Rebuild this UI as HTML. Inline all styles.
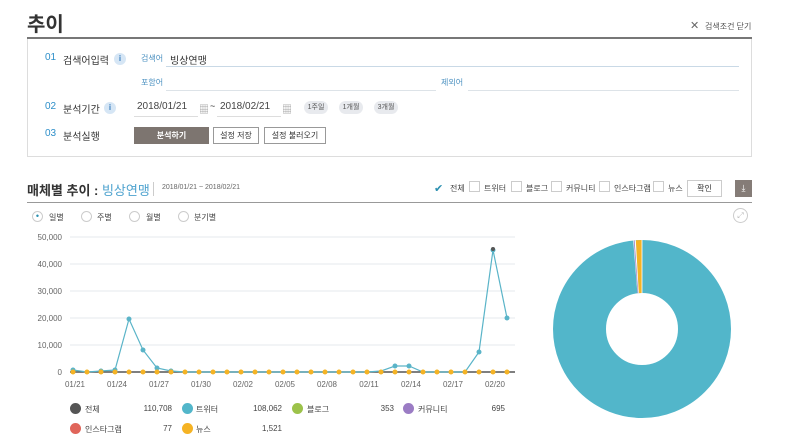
<!DOCTYPE html>
<html><head><meta charset="utf-8"><style>
*{margin:0;padding:0;box-sizing:border-box}
body{width:800px;height:446px;background:#fff;position:relative;overflow:hidden;font-family:"Liberation Sans","Noto Sans CJK KR",sans-serif;color:#333}
.a{position:absolute;white-space:nowrap}
.blue{color:#2e8fc9}
.lbl{font-size:8px;color:#4a90c0}
.info{width:12px;height:12px;border-radius:50%;background:#d6e6f5;color:#3a7fc0;font-size:8px;font-weight:bold;text-align:center;line-height:12px}
.pill{height:13px;border-radius:7px;background:#e8eaee;font-size:7px;color:#555;text-align:center;line-height:13px;width:24px}
.btn{height:17px;border:1px solid #999;font-size:8px;text-align:center;line-height:15px;background:#fff}
.cb{width:11px;height:11px;border:1px solid #ccc;background:#fff}
.rd{width:11px;height:11px;border:1px solid #ccc;border-radius:50%}
.dot{width:11px;height:11px;border-radius:50%}
.sm{font-size:8px;color:#444}
</style></head><body>
<div class="a" style="left:27px;top:8px;font-size:20px;font-weight:bold;color:#333">추이</div>
<div class="a" style="left:690px;top:19px;font-size:11px;color:#666">✕</div>
<div class="a" style="left:705px;top:21px;font-size:8px;color:#555">검색조건 닫기</div>
<div class="a" style="left:27px;top:37px;width:725px;height:2px;background:#777"></div>
<div class="a" style="left:27px;top:39px;width:725px;height:118px;border:1px solid #ddd;border-top:none"></div>

<div class="a blue" style="left:45px;top:52px;font-size:10px">01</div>
<div class="a" style="left:63px;top:52px;font-size:10px">검색어입력</div>
<div class="a info" style="left:114px;top:53px">i</div>
<div class="a lbl" style="left:141px;top:53px">검색어</div>
<div class="a" style="left:170px;top:52px;font-size:10px">빙상연맹</div>
<div class="a" style="left:166px;top:66px;width:573px;height:1px;background:#c9d9e6"></div>
<div class="a lbl" style="left:141px;top:77px">포함어</div>
<div class="a" style="left:166px;top:90px;width:270px;height:1px;background:#dde3e8"></div>
<div class="a lbl" style="left:441px;top:77px">제외어</div>
<div class="a" style="left:468px;top:90px;width:271px;height:1px;background:#dde3e8"></div>

<div class="a blue" style="left:45px;top:101px;font-size:10px">02</div>
<div class="a" style="left:63px;top:101px;font-size:10px">분석기간</div>
<div class="a info" style="left:104px;top:102px">i</div>
<div class="a" style="left:137px;top:101px;font-size:10px;color:#444">2018/01/21</div>
<div class="a" style="left:199px;top:101px;font-size:10px;color:#999">▦</div>
<div class="a" style="left:210px;top:101px;font-size:9px">~</div>
<div class="a" style="left:220px;top:101px;font-size:10px;color:#444">2018/02/21</div>
<div class="a" style="left:282px;top:101px;font-size:10px;color:#999">▦</div>
<div class="a" style="left:134px;top:116px;width:64px;height:1px;background:#ddd"></div>
<div class="a" style="left:217px;top:116px;width:64px;height:1px;background:#ddd"></div>
<div class="a pill" style="left:304px;top:101px">1주일</div>
<div class="a pill" style="left:339px;top:101px">1개월</div>
<div class="a pill" style="left:374px;top:101px">3개월</div>

<div class="a blue" style="left:45px;top:128px;font-size:10px">03</div>
<div class="a" style="left:63px;top:128px;font-size:10px">분석실행</div>
<div class="a btn" style="left:134px;top:127px;width:75px;background:#7d7570;border-color:#7d7570;color:#fff;font-weight:bold">분석하기</div>
<div class="a btn" style="left:213px;top:127px;width:46px">설정 저장</div>
<div class="a btn" style="left:264px;top:127px;width:62px">설정 불러오기</div>

<div class="a" style="left:27px;top:180px;font-size:13px;font-weight:bold;color:#333">매체별 추이 : <span style="color:#4fa3cf;font-weight:normal">빙상연맹</span></div>
<div class="a" style="left:153px;top:182px;width:1px;height:14px;background:#ccc"></div>
<div class="a" style="left:162px;top:184px;font-size:7px;color:#666">2018/01/21 ~ 2018/02/21</div>
<div class="a" style="left:434px;top:182px;font-size:11px;color:#2a8fb0">✔</div>
<div class="a sm" style="left:450px;top:183px">전체</div>
<div class="a cb" style="left:469px;top:181px"></div><div class="a sm" style="left:484px;top:183px">트위터</div>
<div class="a cb" style="left:511px;top:181px"></div><div class="a sm" style="left:526px;top:183px">블로그</div>
<div class="a cb" style="left:551px;top:181px"></div><div class="a sm" style="left:566px;top:183px">커뮤니티</div>
<div class="a cb" style="left:599px;top:181px"></div><div class="a sm" style="left:614px;top:183px">인스타그램</div>
<div class="a cb" style="left:653px;top:181px"></div><div class="a sm" style="left:668px;top:183px">뉴스</div>
<div class="a btn" style="left:687px;top:180px;width:35px;border-color:#ccc">확인</div>
<div class="a" style="left:735px;top:180px;width:17px;height:17px;background:#857c77;color:#fff;font-size:9px;text-align:center;line-height:17px">⤓</div>
<div class="a" style="left:27px;top:202px;width:725px;height:1px;background:#999"></div>

<div class="a rd" style="left:32px;top:211px;text-align:center;line-height:9px;font-size:9px;color:#2a8fb0">•</div><div class="a sm" style="left:49px;top:212px">일별</div>
<div class="a rd" style="left:81px;top:211px"></div><div class="a sm" style="left:97px;top:212px">주별</div>
<div class="a rd" style="left:129px;top:211px"></div><div class="a sm" style="left:146px;top:212px">월별</div>
<div class="a rd" style="left:178px;top:211px"></div><div class="a sm" style="left:194px;top:212px">분기별</div>
<div class="a" style="left:733px;top:208px;width:15px;height:15px;border:1px solid #ccc;border-radius:50%;font-size:8px;color:#bbb;text-align:center;line-height:13px">⤢</div>

<svg class="a" style="left:0;top:0" width="800" height="446">
<g font-size="8" fill="#666" text-anchor="end" font-family="Liberation Sans,sans-serif">
<text x="62" y="240">50,000</text><text x="62" y="267">40,000</text><text x="62" y="294">30,000</text><text x="62" y="321">20,000</text><text x="62" y="348">10,000</text><text x="62" y="375">0</text>
</g>
<g stroke="#e6e9ee" stroke-width="1">
<line x1="70" y1="237" x2="515" y2="237"/><line x1="70" y1="264" x2="515" y2="264"/><line x1="70" y1="291" x2="515" y2="291"/><line x1="70" y1="318" x2="515" y2="318"/><line x1="70" y1="345" x2="515" y2="345"/>
</g>
<line x1="70" y1="372" x2="515" y2="372" stroke="#555" stroke-width="1.5"/>
<g font-size="8" fill="#666" text-anchor="middle" font-family="Liberation Sans,sans-serif">
<text x="75" y="387">01/21</text><text x="117" y="387">01/24</text><text x="159" y="387">01/27</text><text x="201" y="387">01/30</text><text x="243" y="387">02/02</text><text x="285" y="387">02/05</text><text x="327" y="387">02/08</text><text x="369" y="387">02/11</text><text x="411" y="387">02/14</text><text x="453" y="387">02/17</text><text x="495" y="387">02/20</text>
</g>
<polyline fill="none" stroke="#5ab4c8" stroke-width="1.2" points="73,370 87,372 101,371 115,370 129,319 143,350 157,368 171,371 185,372 199,372 213,372 227,372 241,372 255,372 269,372 283,372 297,372 311,372 325,372 339,372 353,372 367,372 381,371 395,366 409,366 423,372 437,372 451,372 465,372 479,352 493,250 507,318"/>
<g fill="#5ab4c8">
<circle cx="73" cy="370" r="2.5"/><circle cx="101" cy="371" r="2.5"/><circle cx="115" cy="370" r="2.5"/><circle cx="129" cy="319" r="2.5"/><circle cx="143" cy="350" r="2.5"/><circle cx="157" cy="368" r="2.5"/><circle cx="171" cy="371" r="2.5"/><circle cx="395" cy="366" r="2.5"/><circle cx="409" cy="366" r="2.5"/><circle cx="479" cy="352" r="2.5"/><circle cx="493" cy="250" r="2.5"/><circle cx="507" cy="318" r="2.5"/>
</g>
<circle cx="493" cy="249" r="2" fill="#555"/>
<g fill="#f5b324">
<circle cx="73" cy="372" r="2.5"/><circle cx="87" cy="372" r="2.5"/><circle cx="101" cy="372" r="2.5"/><circle cx="115" cy="372" r="2.5"/><circle cx="129" cy="372" r="2.5"/><circle cx="143" cy="372" r="2.5"/><circle cx="157" cy="372" r="2.5"/><circle cx="171" cy="372" r="2.5"/><circle cx="185" cy="372" r="2.5"/><circle cx="199" cy="372" r="2.5"/><circle cx="213" cy="372" r="2.5"/><circle cx="227" cy="372" r="2.5"/><circle cx="241" cy="372" r="2.5"/><circle cx="255" cy="372" r="2.5"/><circle cx="269" cy="372" r="2.5"/><circle cx="283" cy="372" r="2.5"/><circle cx="297" cy="372" r="2.5"/><circle cx="311" cy="372" r="2.5"/><circle cx="325" cy="372" r="2.5"/><circle cx="339" cy="372" r="2.5"/><circle cx="353" cy="372" r="2.5"/><circle cx="367" cy="372" r="2.5"/><circle cx="381" cy="372" r="2.5"/><circle cx="395" cy="372" r="2.5"/><circle cx="409" cy="372" r="2.5"/><circle cx="423" cy="372" r="2.5"/><circle cx="437" cy="372" r="2.5"/><circle cx="451" cy="372" r="2.5"/><circle cx="465" cy="372" r="2.5"/><circle cx="479" cy="372" r="2.5"/><circle cx="493" cy="372" r="2.5"/><circle cx="507" cy="372" r="2.5"/>
</g>
<!-- donut -->
<circle cx="642" cy="329" r="62.5" fill="none" stroke="#52b6ca" stroke-width="53"/>
<path d="M642 240 L642 293 L638.8 293.1 L635.8 240.2 Z" fill="#f5b324"/>
<path d="M635.8 240.2 L638.8 293.1 L637.4 293.3 L633.2 240.4 Z" fill="#fff"/>
<path d="M634.6 240.3 L638.2 293.2 L637.6 293.3 L633.8 240.4 Z" fill="#9b7cc4"/>
<path d="M642 240 L642 293" stroke="#fff" stroke-width="0.8"/>
</svg>

<div class="a dot" style="left:70px;top:403px;background:#555"></div><div class="a sm" style="left:85px;top:404px">전체</div><div class="a sm" style="left:140px;top:404px;width:32px;text-align:right">110,708</div>
<div class="a dot" style="left:182px;top:403px;background:#52b6ca"></div><div class="a sm" style="left:196px;top:404px">트위터</div><div class="a sm" style="left:250px;top:404px;width:32px;text-align:right">108,062</div>
<div class="a dot" style="left:292px;top:403px;background:#9cc24a"></div><div class="a sm" style="left:307px;top:404px">블로그</div><div class="a sm" style="left:362px;top:404px;width:32px;text-align:right">353</div>
<div class="a dot" style="left:403px;top:403px;background:#9b7cc4"></div><div class="a sm" style="left:418px;top:404px">커뮤니티</div><div class="a sm" style="left:473px;top:404px;width:32px;text-align:right">695</div>
<div class="a dot" style="left:70px;top:423px;background:#e0655a"></div><div class="a sm" style="left:85px;top:424px">인스타그램</div><div class="a sm" style="left:140px;top:424px;width:32px;text-align:right">77</div>
<div class="a dot" style="left:182px;top:423px;background:#f5b324"></div><div class="a sm" style="left:196px;top:424px">뉴스</div><div class="a sm" style="left:250px;top:424px;width:32px;text-align:right">1,521</div>
</body></html>
